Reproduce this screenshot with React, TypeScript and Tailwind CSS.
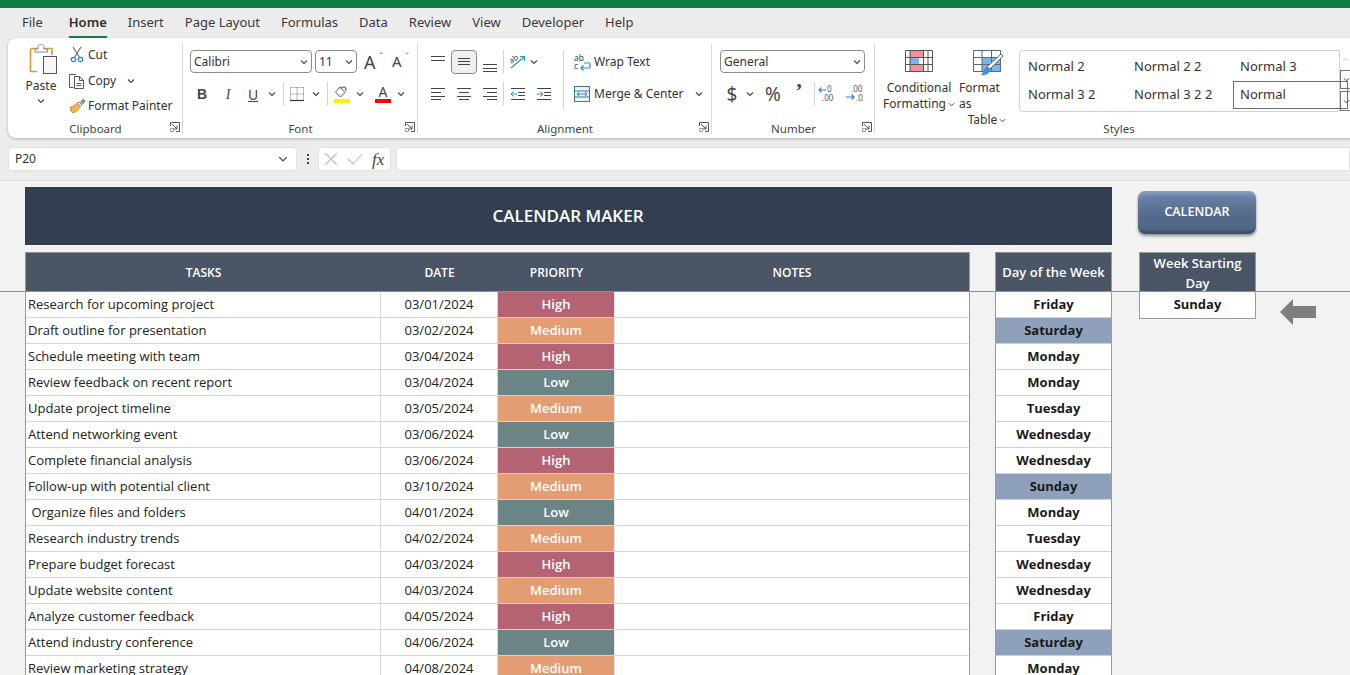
import React from "react";

const UI = "font-['Noto_Sans','Open_Sans',sans-serif]";

const Chev = ({ s = 8 }: { s?: number }) => (
  <svg width={s} height={s} viewBox="0 0 8 8" fill="none" stroke="#444" strokeWidth="1.1"><path d="M1 2.5 4 5.5 7 2.5" /></svg>
);
const ChevCell = ({ className = "" }: { className?: string }) => (
  <div className={`w-[14px] h-[24px] flex items-center justify-center ${className}`}><Chev /></div>
);
const Launcher = () => (
  <svg className="absolute right-[3px] top-[3px]" width="10" height="10" viewBox="0 0 10 10" fill="none" stroke="#555" strokeWidth="1">
    <path d="M.5 4V.5H9.5V9.5H6" /><path d="M2 2 7 7M7 3.5V7H3.5" /><path d="M.5 6.5H3.5V9.5H.5Z" stroke="#999" />
  </svg>
);
const Sep = ({ className = "" }: { className?: string }) => <div className={`w-px bg-[#d4d4d4] ${className}`} />;

const Group = ({ w, label, launcher = true, children }: { w: string; label: string; launcher?: boolean; children: React.ReactNode }) => (
  <div className={`${w} shrink-0 flex flex-col pt-[4px] relative`}>
    <div className="h-[77px] relative">{children}</div>
    <div className="h-[19px] relative flex items-center justify-center text-[11.5px] text-[#444]">
      {label}
      {launcher && <Launcher />}
    </div>
    <div className="absolute right-0 top-[6px] bottom-[4px] w-px bg-[#d8d8d8]" />
  </div>
);

const Lines = ({ ys, xs }: { ys: number[]; xs: [number, number][] }) => (
  <svg width="16" height="16" viewBox="0 0 16 16" stroke="#444" strokeWidth="1" fill="none">
    {ys.map((y, i) => <path key={i} d={`M${xs[i][0]} ${y + 0.5}H${xs[i][1]}`} />)}
  </svg>
);
const full: [number, number] = [1, 15];
const Slot = ({ w = "w-[26px]", active = false, className = "", children }: { w?: string; active?: boolean; className?: string; children: React.ReactNode }) => (
  <div className={`${w} h-[24px] flex items-center justify-center ${active ? "bg-[#f0f0f0] border border-[#8a8a8a] rounded-[4px]" : ""} ${className}`}>{children}</div>
);

const Select = ({ w, text, className = "" }: { w: string; text: string; className?: string }) => (
  <div className={`${w} h-[23px] bg-white border border-[#8c8c8c] rounded-[4px] flex items-center justify-between pl-[3px] pr-[3px] text-[12px] text-[#333] ${className}`}>
    <span>{text}</span><Chev />
  </div>
);

const PasteIcon = () => (
  <svg width="30" height="32" viewBox="0 0 30 32" fill="none">
    <path d="M1.5 5.5H23V12M8 28.5H1.5V5.5" stroke="#d99a3c" strokeWidth="1.6" />
    <path d="M6 6 9 6 C9 2 10 1.5 12 1.5 C14 1.5 15 2 15 6H18.5V9H6Z" fill="#fff" stroke="#888" strokeWidth="1" />
    <rect x="14.5" y="13.5" width="13" height="17" fill="#f7f7f7" stroke="#555" />
  </svg>
);
const CutIcon = () => (
  <svg width="14" height="17" viewBox="0 0 14 17" fill="none">
    <path d="M3 1 9.5 11.5M11 1 4.5 11.5" stroke="#666" strokeWidth="1.1" />
    <circle cx="3.5" cy="13.5" r="2.2" stroke="#2b7cd3" strokeWidth="1.2" />
    <circle cx="10.5" cy="13.5" r="2.2" stroke="#2b7cd3" strokeWidth="1.2" />
  </svg>
);
const CopyIcon = () => (
  <svg width="16" height="16" viewBox="0 0 16 16" fill="none" stroke="#555" strokeWidth="1">
    <path d="M4.5 14.5H.5V1.5H7" /><path d="M5.5 3.5H10.5L14.5 7.5V15.5H5.5Z" fill="#fff" /><path d="M10.5 3.5V7.5H14.5M7.5 10.5H12.5M7.5 12.5H12.5" />
  </svg>
);
const BrushIcon = () => (
  <svg width="17" height="16" viewBox="0 0 17 16" fill="none">
    <path d="M1 9 C4 9 6 7 7 5.5L11 9.5C9 12 7 14 4 15 L3 13.5 2 13 1.5 11Z" fill="#f2b450" stroke="#c97a1f" strokeWidth="0.8" />
    <path d="M8 5 11.5 8.5 13 7 10 4Z" fill="#fff" stroke="#666" strokeWidth="0.8" />
    <path d="M11.5 4.5 15 1M13 6 16 2.5" stroke="#666" strokeWidth="1.2" />
  </svg>
);
const BorderIcon = () => (
  <svg width="16" height="16" viewBox="0 0 16 16" fill="none">
    <path d="M1.5 1.5H14.5M1.5 1.5V14M14.5 1.5V14M8 1.5V14M1.5 8H14.5" stroke="#777" strokeWidth="1" strokeDasharray="1 1" />
    <path d="M1 14.5H15" stroke="#333" strokeWidth="1.2" />
  </svg>
);
const FillIcon = () => (
  <svg width="18" height="19" viewBox="0 0 18 19" fill="none">
    <path d="M7 2 2.5 7 7.5 12 12 7.5Z" fill="#fff" stroke="#555" strokeWidth="1" />
    <path d="M8 4C9 2 11 1.5 12.5 3L13 6" stroke="#2b7cd3" strokeWidth="1.3" />
    <rect x="1" y="14" width="16" height="4" fill="#fff200" />
  </svg>
);
const OrientIcon = () => (
  <svg width="18" height="18" viewBox="0 0 18 18" fill="none">
    <path d="M2 15 15 4M11 3.5H15.5V8" stroke="#2b8ad3" strokeWidth="1.2" />
    <text x="1" y="9" fontSize="8" fill="#444" transform="rotate(-35 5 8)" fontFamily="Noto Sans">ab</text>
  </svg>
);
const IndentIcon = ({ flip = false }: { flip?: boolean }) => (
  <svg width="16" height="16" viewBox="0 0 16 16" fill="none" strokeWidth="1">
    <path d="M1 2.5H15M8 6.5H15M8 9.5H15M1 13.5H15" stroke="#444" />
    <path d={flip ? "M1 8H6.5M4.5 5.5 7 8 4.5 10.5" : "M7 8H1.5M3.5 5.5 1 8 3.5 10.5"} stroke="#2b8ad3" />
  </svg>
);
const WrapIcon = () => (
  <svg width="18" height="18" viewBox="0 0 18 18" fill="none">
    <text x="0" y="8" fontSize="8.5" fill="#444" fontFamily="Noto Sans">ab</text>
    <text x="0" y="16" fontSize="8.5" fill="#444" fontFamily="Noto Sans">c</text>
    <path d="M10 10H15C16.5 10 16.5 15 15 15H7M9.5 12.5 7 15 9.5 17.5" stroke="#2b8ad3" strokeWidth="1.2" />
  </svg>
);
const MergeIcon = () => (
  <svg width="17" height="17" viewBox="0 0 17 17" fill="none">
    <rect x=".5" y=".5" width="15" height="15" stroke="#3b7a8a" fill="#eef6fb" />
    <path d="M.5 5H15.5M.5 11H15.5" stroke="#3b7a8a" />
    <path d="M3 8H13M5 6 3 8 5 10M11 6 13 8 11 10" stroke="#2b7cd3" strokeWidth="1" />
  </svg>
);
const DecIcon = ({ more = false }: { more?: boolean }) => (
  <svg width="20" height="18" viewBox="0 0 20 18" fill="none">
    <text x={more ? "7" : "10"} y="7" fontSize="8" fill="#555" fontFamily="Noto Sans">{more ? ".00" : "0"}</text>
    <text x={more ? "12" : "5"} y="16" fontSize="8" fill="#555" fontFamily="Noto Sans">{more ? ".0" : ".00"}</text>
    {more
      ? <path d="M2 12H10M7.5 9.5 10 12 7.5 14.5" stroke="#2b7cd3" strokeWidth="1.1" />
      : <path d="M2 5H9M4.5 2.5 2 5 4.5 7.5" stroke="#2b7cd3" strokeWidth="1.1" />}
  </svg>
);
const CFIcon = () => (
  <svg width="29" height="23" viewBox="0 0 29 23" fill="none">
    <rect x=".5" y=".5" width="27" height="21" fill="#fff" />
    <rect x="5" y="1" width="13" height="6" fill="#f98f97" />
    <rect x="5" y="8" width="9" height="6" fill="#7ab4ea" />
    <rect x="5" y="15" width="14" height="6" fill="#f98f97" />
    <path d="M.5.5H27.5V21.5H.5ZM.5 7.5H27.5M.5 14.5H27.5M5 .5V21.5M18.5 .5V21.5M23 .5V21.5" stroke="#555" strokeWidth="1" />
  </svg>
);
const FTIcon = () => (
  <svg width="31" height="27" viewBox="0 0 31 27" fill="none">
    <rect x="9" y="8" width="19" height="13" fill="#7ab4ea" />
    <path d="M.5.5H27.5V21.5H.5ZM.5 7.5H27.5M.5 14.5H27.5M9 .5V21.5M18.5 .5V21.5" stroke="#5b6a75" strokeWidth="1" />
    <path d="M28 4 30 6 17 19 14 17Z" fill="#fff" stroke="#666" strokeWidth="1" />
    <path d="M14 17C11 18 11 22 8 25 12 26 17 24 17 19Z" fill="#3f8fd8" />
  </svg>
);

const Tabs = () => (
  <div className="h-[30px] flex items-center pl-[22px] gap-[21px] text-[13px] text-[#3a3a3a] shrink-0">
    <span>File</span>
    <span className="ml-[5px] relative font-semibold text-[#2f2f2f]">Home<span className="absolute left-0 right-0 -bottom-[5px] h-[2px] bg-[#107c41]" /></span>
    {["Insert", "Page Layout", "Formulas", "Data", "Review", "View", "Developer", "Help"].map((t) => <span key={t}>{t}</span>)}
  </div>
);

const Ribbon = () => (
  <div className="h-[100px] ml-[8px] w-[1400px] bg-white rounded-lg shadow-[0_1px_3px_rgba(0,0,0,0.25)] flex shrink-0 text-[12px] text-[#333]">
    <Group w="w-[175px]" label="Clipboard">
      <div className="flex h-full">
        <div className="ml-[14px] w-[38px] flex flex-col items-center">
          <div className="mt-[1px] ml-[6px]"><PasteIcon /></div>
          <div className="mt-[3px] leading-[16px]">Paste</div>
          <div className="mt-[3px]"><Chev /></div>
        </div>
        <div className="ml-[8px] flex flex-col">
          <div className="h-[26px] flex items-center"><div className="w-[20px] flex justify-center -ml-[1px]"><CutIcon /></div><span className="ml-[1px]">Cut</span></div>
          <div className="h-[26px] flex items-center"><div className="w-[20px] flex justify-center -ml-[1px]"><CopyIcon /></div><span className="ml-[1px]">Copy</span><span className="ml-[11px]"><Chev /></span></div>
          <div className="h-[26px] flex items-center"><div className="w-[20px] flex justify-center -ml-[1px]"><BrushIcon /></div><span className="ml-[1px]">Format Painter</span></div>
        </div>
      </div>
    </Group>
    <Group w="w-[235px]" label="Font">
      <div className="flex items-center h-[23px] mt-[8px] ml-[7px]">
        <Select w="w-[122px]" text="Calibri" />
        <Select w="w-[42px]" text="11" className="ml-[3px]" />
        <span className="ml-[7px] text-[18px] leading-none text-[#444] relative w-[18px]">A<span className="absolute -right-[1px] -top-[1px] text-[9px] text-[#2b7cd3] leading-none">ˆ</span></span>
        <span className="ml-[10px] text-[15px] leading-none text-[#444] relative w-[16px]">A<span className="absolute -right-[1px] -top-[2px] text-[9px] text-[#2b7cd3] leading-none">ˇ</span></span>
      </div>
      <div className="flex items-center h-[24px] mt-[9px] ml-[7px]">
        <Slot w="w-[24px]" className="font-bold text-[14px] text-[#444] font-['Liberation_Sans']">B</Slot>
        <Slot w="w-[24px]" className="ml-[2px] italic text-[14px] text-[#444] font-['Liberation_Serif']">I</Slot>
        <Slot w="w-[24px]" className="ml-[1px] underline text-[14px] text-[#444]">U</Slot>
        <ChevCell />
        <Sep className="ml-[4px] h-[24px]" />
        <Slot w="w-[24px]" className="ml-px"><BorderIcon /></Slot>
        <ChevCell />
        <Sep className="ml-[4px] h-[24px]" />
        <Slot w="w-[24px]" className="ml-[2px]"><FillIcon /></Slot>
        <ChevCell className="-ml-px" />
        <Slot w="w-[24px]" className="ml-[4px]">
          <div className="flex flex-col items-center w-[16px]">
            <span className="text-[14px] leading-[14px] text-[#444]">A</span>
            <span className="w-[16px] h-[4px] bg-[#ff0000]" />
          </div>
        </Slot>
        <ChevCell className="-ml-px" />
      </div>
    </Group>
    <Group w="w-[294px]" label="Alignment">
      <div className="flex h-full">
        <div className="w-[145px] pl-[7px] pt-[8px]">
          <div className="flex items-center h-[24px]">
            <Slot><Lines ys={[2, 6]} xs={[full, full]} /></Slot>
            <Slot active><Lines ys={[4, 7, 10]} xs={[[2, 14], [2, 14], [2, 14]]} /></Slot>
            <Slot><div className="mt-[5px]"><Lines ys={[7, 11, 14]} xs={[full, full, full]} /></div></Slot>
            <Sep className="h-[24px]" />
            <Slot className="ml-px"><OrientIcon /></Slot>
            <ChevCell className="-ml-[4px]" />
          </div>
          <div className="flex items-center h-[24px] mt-[8px]">
            <Slot><Lines ys={[2, 6, 10, 13]} xs={[full, [1, 11], full, [1, 11]]} /></Slot>
            <Slot><Lines ys={[2, 6, 10, 13]} xs={[full, [3, 13], full, [3, 13]]} /></Slot>
            <Slot><Lines ys={[2, 6, 10, 13]} xs={[full, [5, 15], full, [5, 15]]} /></Slot>
            <Sep className="h-[24px]" />
            <Slot className="ml-px"><IndentIcon /></Slot>
            <Slot><IndentIcon flip /></Slot>
          </div>
        </div>
        <Sep className="mt-[8px] h-[60px]" />
        <div className="pl-[10px] pt-[8px]">
          <div className="flex items-center h-[24px]"><WrapIcon /><span className="ml-[2px]">Wrap Text</span></div>
          <div className="flex items-center h-[24px] mt-[8px]"><MergeIcon /><span className="ml-[3px]">Merge &amp; Center</span><span className="ml-[11px]"><Chev /></span></div>
        </div>
      </div>
    </Group>
    <Group w="w-[163px]" label="Number">
      <div className="pl-[8px] pt-[8px]">
        <Select w="w-[145px]" text="General" />
        <div className="flex items-center h-[24px] mt-[9px]">
          <Slot w="w-[24px]" className="text-[19px] text-[#444]">$</Slot>
          <ChevCell className="-ml-px" />
          <Slot w="w-[24px]" className="ml-[4px] text-[19px] text-[#444]">%</Slot>
          <Slot w="w-[24px]" className="ml-[2px] text-[22px] font-bold text-[#444] font-['Liberation_Serif']"><span className="mb-[8px]">’</span></Slot>
          <Sep className="ml-[3px] h-[24px]" />
          <Slot w="w-[24px]"><DecIcon /></Slot>
          <Slot w="w-[24px]" className="ml-[3px]"><DecIcon more /></Slot>
        </div>
      </div>
    </Group>
    <Group w="w-[488px]" label="Styles" launcher={false}>
      <div className="flex h-full items-start">
        <div className="ml-[4px] w-[80px] flex flex-col items-center pt-[8px] leading-[16px]">
          <CFIcon />
          <span className="mt-[7px]">Conditional</span>
          <span className="flex items-center gap-[2px]">Formatting <Chev s={7} /></span>
        </div>
        <div className="w-[56px] flex flex-col items-center pt-[8px] leading-[16px]">
          <div className="ml-[3px] h-[23px]"><FTIcon /></div>
          <span className="mt-[7px]">Format as</span>
          <span className="flex items-center gap-[2px]">Table <Chev s={7} /></span>
        </div>
        <div className="ml-[4px] mt-[8px] w-[321px] h-[62px] border border-[#d0d0d0] rounded-l-[4px] grid grid-cols-[106px_106px_106px] grid-rows-[29px_28px] pt-[1px] text-[13px] text-[#333] pl-[8px]">
          <div className="flex items-center">Normal 2</div>
          <div className="flex items-center">Normal 2 2</div>
          <div className="flex items-center">Normal 3</div>
          <div className="flex items-center">Normal 3 2</div>
          <div className="flex items-center">Normal 3 2 2</div>
          <div className="flex items-center border border-[#6e6e6e] pl-[6px] -ml-[7px] -mr-[2px]">Normal</div>
        </div>
        <div className="mt-[8px] w-[12px] h-[62px] flex flex-col">
          <div className="h-[20px] flex items-center justify-center opacity-30 rotate-180"><Chev s={7} /></div>
          <div className="h-[19px] border border-[#777] flex items-center justify-center"><Chev s={7} /></div>
          <div className="mt-[2px] h-[20px] border border-[#777] flex items-center justify-center"><Chev s={7} /></div>
        </div>
      </div>
    </Group>
  </div>
);

const FormulaBar = () => (
  <div className="h-[24px] mt-[9px] flex items-center pl-[8px] shrink-0 text-[12px] text-[#333]">
    <div className="w-[289px] h-full bg-white border border-[#e2e2e2] rounded-[4px] flex items-center justify-between pl-[6px] pr-[8px]">
      <span>P20</span><Chev s={10} />
    </div>
    <div className="w-[21px] flex flex-col items-center gap-[2px]">
      <span className="w-[2px] h-[2px] bg-[#444]" /><span className="w-[2px] h-[2px] bg-[#444]" /><span className="w-[2px] h-[2px] bg-[#444]" />
    </div>
    <div className="w-[73px] h-full bg-white border border-[#e2e2e2] rounded-[4px] flex items-center pl-[5px]">
      <svg width="14" height="14" viewBox="0 0 14 14" stroke="#bdbdbd" strokeWidth="1.1" fill="none"><path d="M1 1 13 13M13 1 1 13" /></svg>
      <svg className="ml-[9px]" width="16" height="14" viewBox="0 0 16 14" stroke="#bdbdbd" strokeWidth="1.1" fill="none"><path d="M1 7 6 12 15 2" /></svg>
      <span className="ml-[9px] italic font-['Liberation_Serif'] text-[17px] text-[#444] leading-none">fx</span>
    </div>
    <div className="ml-[5px] flex-1 h-full bg-white border border-[#e2e2e2] rounded-l-[4px]" />
  </div>
);

type P = "High" | "Medium" | "Low";
const rows: [string, string, P, string, boolean][] = [
  ["Research for upcoming project", "03/01/2024", "High", "Friday", false],
  ["Draft outline for presentation", "03/02/2024", "Medium", "Saturday", true],
  ["Schedule meeting with team", "03/04/2024", "High", "Monday", false],
  ["Review feedback on recent report", "03/04/2024", "Low", "Monday", false],
  ["Update project timeline", "03/05/2024", "Medium", "Tuesday", false],
  ["Attend networking event", "03/06/2024", "Low", "Wednesday", false],
  ["Complete financial analysis", "03/06/2024", "High", "Wednesday", false],
  ["Follow-up with potential client", "03/10/2024", "Medium", "Sunday", true],
  ["\u00A0Organize files and folders", "04/01/2024", "Low", "Monday", false],
  ["Research industry trends", "04/02/2024", "Medium", "Tuesday", false],
  ["Prepare budget forecast", "04/03/2024", "High", "Wednesday", false],
  ["Update website content", "04/03/2024", "Medium", "Wednesday", false],
  ["Analyze customer feedback", "04/05/2024", "High", "Friday", false],
  ["Attend industry conference", "04/06/2024", "Low", "Saturday", true],
  ["Review marketing strategy", "04/08/2024", "Medium", "Monday", false],
];
const pColor: Record<P, string> = { High: "bg-[#b56373]", Medium: "bg-[#e49c72]", Low: "bg-[#6b8485]" };

const Sheet = () => (
  <div className="mt-[9px] flex-1 min-h-0 border-t border-[#dcdcdc] bg-[#f2f2f2] relative font-['Open_Sans',sans-serif] text-[13px] overflow-hidden">
    <div className="flex pl-[25px] pt-[6px]">
      <div className="w-[1087px] shrink-0">
        <div className="h-[58px] bg-[#333f50] flex items-center justify-center text-white font-semibold text-[17px] pr-[1px]">CALENDAR MAKER</div>
        <div className="flex mt-[7px]">
          <div className="w-[945px] shrink-0 border-l border-r border-[#9a9a9a]">
            <div className="h-[40px] bg-[#4a5665] border-t border-[#8d8d8d] grid grid-cols-[355px_117px_117px_1fr] items-center text-center text-white font-semibold text-[12px]">
              <div>TASKS</div><div>DATE</div><div>PRIORITY</div><div>NOTES</div>
            </div>
            {rows.map((r, i) => (
              <div key={i} className="h-[26px] bg-white grid grid-cols-[355px_117px_117px_1fr] border-b border-[#d4d4d4] text-[#222] items-stretch">
                <div className="pl-[2px] border-r border-[#d4d4d4] flex items-center whitespace-pre">{r[0]}</div>
                <div className="border-r border-[#d4d4d4] flex items-center justify-center">{r[1]}</div>
                <div className={`${pColor[r[2]]} text-white font-semibold flex items-center justify-center border-r border-[#e6e6e6]`}>{r[2]}</div>
                <div />
              </div>
            ))}
          </div>
          <div className="ml-[25px] w-[117px] shrink-0 border-l border-r border-[#9a9a9a]">
            <div className="h-[40px] bg-[#4a5665] border-t border-[#8d8d8d] flex items-center justify-center text-white font-semibold text-[13px]">Day of the Week</div>
            {rows.map((r, i) => (
              <div key={i} className={`h-[26px] flex items-center justify-center font-bold text-[#1a1a1a] border-b border-[#d0d0d0] ${r[4] ? "bg-[#8fa0ba]" : "bg-white"}`}>{r[3]}</div>
            ))}
          </div>
        </div>
      </div>
      <div className="ml-[26px] w-[118px] shrink-0">
        <div className="mt-[4px] h-[43px] rounded-[7px] bg-gradient-to-b from-[#7189ad] via-[#566d8e] to-[#4d6486] shadow-[0_2px_3px_rgba(0,0,0,0.4),inset_0_3px_4px_rgba(255,255,255,0.2),inset_0_-3px_3px_rgba(20,30,50,0.3)] flex items-center justify-center text-white font-semibold text-[12.5px]">CALENDAR</div>
        <div className="mt-[18px] ml-px w-[117px] border border-[#9a9a9a]">
          <div className="h-[39px] bg-[#4a5665] flex items-center justify-center text-center text-white font-semibold text-[13px] leading-[20px]">Week Starting<br />Day</div>
          <div className="h-[26px] bg-white flex items-center justify-center font-bold text-[#1a1a1a]">Sunday</div>
        </div>
      </div>
      <div className="ml-[24px] mt-[111px] h-[28px] shrink-0">
        <svg width="36" height="28" viewBox="0 0 36 28"><path d="M0 14 13 1V8H36V20H13V27Z" fill="#7f7f7f" /></svg>
      </div>
    </div>
    <div className="absolute left-0 right-0 top-[110px] h-px bg-[#8f8f8f]" />
  </div>
);

export default function App() {
  return (
    <div className={`w-[1350px] h-[675px] overflow-hidden bg-[#ececec] flex flex-col ${UI}`}>
      <div className="h-[8px] bg-[#107c41] shrink-0" />
      <Tabs />
      <Ribbon />
      <FormulaBar />
      <Sheet />
    </div>
  );
}
